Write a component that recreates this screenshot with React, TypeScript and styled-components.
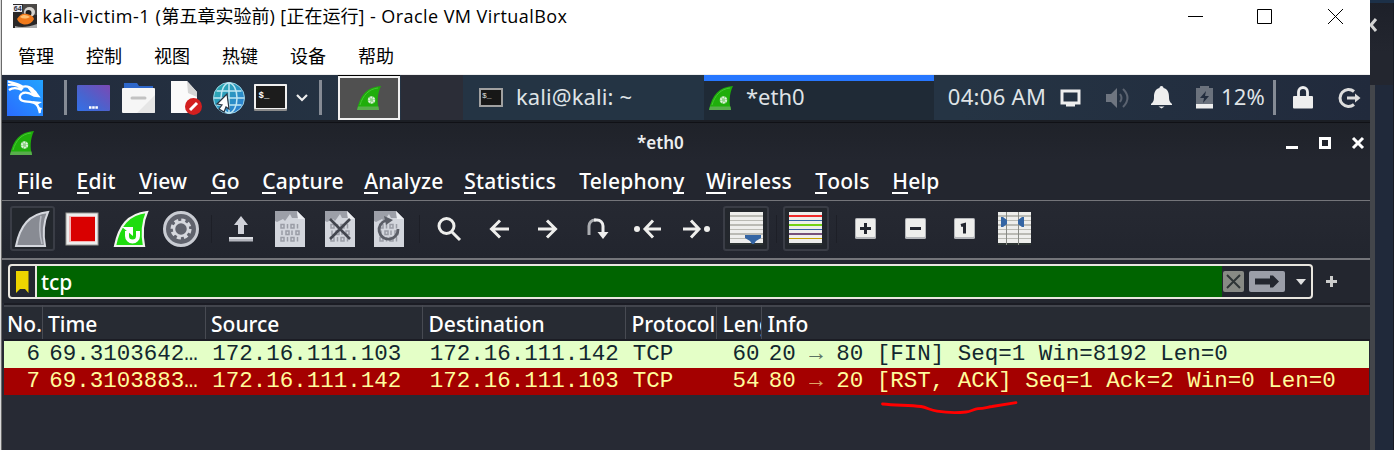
import React from 'react';
import styled, { createGlobalStyle } from 'styled-components';

const ui = `"Noto Sans", "Open Sans", sans-serif`;
const mono = `"Liberation Mono", "Courier New", monospace`;

const Global = createGlobalStyle`
  *, *::before, *::after { box-sizing: border-box; }
  body { margin: 0; overflow: hidden; background: #23262f; }
  svg { display: block; flex: none; overflow: visible; }
`;

const Screen = styled.div`
  width: 1394px; height: 450px; display: flex; overflow: hidden;
  background: #23262f; font-family: ${ui};
`;
const LeftEdge = styled.div`
  width: 2px; flex: none; background: linear-gradient(90deg, #d9d9d9 50%, #6a6a6a 50%);
`;
const Vm = styled.div`
  width: 1368px; flex: none; display: flex; flex-direction: column; background: #272a34;
`;
const RightEdge = styled.div`
  position: relative; flex: 1; display: flex; flex-direction: column; overflow: hidden;
  background: #23262f; border-top: 3px solid #1c3048;
`;
const RightTop = styled.div`
  height: 82px; color: #d4d4d4; padding-top: 15px; border-right: 1px solid #171a22;
  background: linear-gradient(#1d2029, #23262f 60%);
`;
const RightBody = styled.div`
  flex: 1; display: flex;
  &::before { content: ''; width: 5px; background: #43464b; }
  &::after { content: ''; flex: 1; background: #20293a; border-right: 1px solid #171a22; }
`;

const TitleBar = styled.div`
  height: 33px; flex: none; display: flex; align-items: center; background: #fff;
  padding: 0 0 0 11px; color: #000;
`;
const TitleText = styled.span<{ $ls?: number }>`
  font: 18px/24px "Open Sans", "Noto Sans CJK SC", sans-serif; margin-top: -2px;
  letter-spacing: ${p => p.$ls ?? 0}px; white-space: pre;
`;
const HostControls = styled.div`
  margin-left: auto; display: flex; align-items: center; gap: 54px; padding-right: 27px;
  & > :last-child { margin-left: 2px; }
`;
const HostMenu = styled.div`
  height: 42px; flex: none; display: flex; gap: 32px; padding: 10px 0 0 16px; background: #fff;
  border-bottom: 1px solid #eee;
  font: 18px/24px "Noto Sans CJK SC", sans-serif; color: #000;
`;

const Panel = styled.div`
  height: 45px; flex: none; display: flex; align-items: center;
  background: linear-gradient(90deg, #222b3c, #253444 30%, #253444 70%, #212a3c);
  color: #dfe3e6;
`;
const Slot = styled.div<{ $w: number; $ml?: number }>`
  width: ${p => p.$w}px; margin-left: ${p => p.$ml ?? 0}px; flex: none;
  display: flex; align-items: center; justify-content: center;
`;
const PanelDivider = styled.div<{ $ml: number }>`
  width: 3px; height: 35px; flex: none; margin-left: ${p => p.$ml}px; background: #858b95;
`;
const Launcher = styled.div`
  width: 62px; height: 44px; margin: 1px 0 0 16px; flex: none; border: 2px solid #f1f1f1; background: #505050;
  display: flex; align-items: center; justify-content: center; box-shadow: 0 -1px #000;
`;
const Gap = styled.div`
  width: 62px; height: 45px; margin-left: 1px; flex: none; background: #2b2d37;
`;
const Task = styled.div<{ $w: number; $active?: boolean; $pl: number }>`
  width: ${p => p.$w}px; height: 45px; flex: none; display: flex; align-items: center;
  gap: 13px; padding-left: ${p => p.$pl}px;
  background: ${p => (p.$active ? '#1f2a36' : '#243444')};
  box-shadow: ${p => (p.$active ? 'inset 0 6px #2777ff' : 'none')};
`;
const PanelText = styled.span<{ $ls?: number }>`
  font: 22px/30px ${ui}; letter-spacing: ${p => p.$ls ?? 0}px; white-space: pre;
  margin-top: -3px;
`;

const AppTitle = styled.div`
  height: 40px; flex: none; display: flex; align-items: center;
  padding: 3px 6px 0 8px; color: #eceef0; border-top: 2px solid #1b1e24;
  background: linear-gradient(#1f2229, #23262f);
  box-shadow: inset 0 1px #101116;
`;
const AppName = styled.span`
  width: 50px; margin: 0 0 0 603px; font: 600 17px/24px ${ui}; letter-spacing: 0; white-space: nowrap;
`;
const AppControls = styled.div`
  margin-left: auto; display: flex; align-items: center; gap: 21px;
`;
const MenuBar = styled.div`
  height: 41px; flex: none; display: flex; padding: 6px 0 0 15.6px;
  background: #23262f; color: #fff; border-bottom: 1px solid #74757a;
`;
const MenuItem = styled.span<{ $w: number }>`
  width: ${p => p.$w}px; flex: none; font: 500 21px/30px ${ui}; letter-spacing: 0.2px; white-space: nowrap;
`;
const Mnemonic = styled.span`
  box-shadow: inset 0 -2px #fff; display: inline-block; height: 28px; line-height: 30px;
`;
const Toolbar = styled.div`
  height: 59px; flex: none; display: flex; align-items: center; padding: 0 0 2px 7.7px;
  background: linear-gradient(#262932, #22252e); border-bottom: 2px solid #74757a;
`;
const Tool = styled.div<{ $pressed?: boolean }>`
  width: 45.5px; margin-right: 4px; height: 45px; flex: none; display: flex; align-items: center; justify-content: center;
  border-radius: 3px;
  border: ${p => (p.$pressed ? '2px solid #3a3d46' : 'none')};
  background: ${p => (p.$pressed ? '#23272d' : 'transparent')};
`;
const ToolDivider = styled.div`
  width: 1px; margin: 0 5.8px 0 3.5px; height: 28px; flex: none; background: #1d1f27;
`;

const FilterBar = styled.div`
  height: 43px; flex: none; display: flex; align-items: center; padding: 0 0 0 6px; background: #23262f;
`;
const FilterBox = styled.div`
  width: 1305px; height: 35px; flex: none; display: flex; align-items: center; overflow: hidden;
  border: 2px solid #e9e6df; border-radius: 4px; background: #23262f;
`;
const Bookmark = styled.div`
  width: 27px; height: 31px; flex: none; display: flex; align-items: center; justify-content: center;
  border-right: 2px solid #e9e6df;
`;
const FilterInput = styled.div`
  width: 1185px; height: 31px; flex: none; padding-left: 4px; background: #006400; color: #fff;
  font: 500 21px/32px ${ui};
`;
const FilterButton = styled.div<{ $w: number; $ml: number; $bg: string }>`
  width: ${p => p.$w}px; height: 21px; margin-left: ${p => p.$ml}px; flex: none; border-radius: 2px;
  display: flex; align-items: center; justify-content: center; background: ${p => p.$bg};
`;

const cols = '38.5px 163px 217.5px 203px 91px 45px 1fr';
const Header = styled.div`
  height: 38px; flex: none; display: grid; grid-template-columns: ${cols}; margin-left: 2px;
  border-top: 2px solid #1b1c24; border-bottom: 2px solid #1b1c24;
  box-shadow: inset 0 2px #42454d; background: #272b33; color: #fff;
`;
const HeadCell = styled.div`
  min-width: 0; overflow: hidden; padding: 5px 0 0 5.5px; border-right: 1px solid #474a52;
  font: 500 21px/29px ${ui}; white-space: nowrap;
  &:first-child { padding-left: 3px; }
  &:last-child { border-right: 0; }
`;
const Row = styled.div<{ $alert?: boolean }>`
  height: 27px; flex: none; display: grid; grid-template-columns: ${cols}; margin: 0 1px 0 2px;
  background: ${p => (p.$alert ? '#a40000' : '#e4ffc7')};
  color: ${p => (p.$alert ? '#fffc9c' : '#12272e')};
`;
const Cell = styled.div<{ $right?: boolean }>`
  min-width: 0; padding: ${p => (p.$right ? '0 2.5px 0 0' : '0 0 0 6.7px')}; font: 22.5px/27px ${mono};
  text-align: ${p => (p.$right ? 'right' : 'left')}; white-space: pre;
`;
const Arrow = styled.span`
  opacity: 0.65;
`;
const Empty = styled.div`
  flex: 1; position: relative; background: #272a34;
`;
const PenMark = styled.svg`
  position: absolute; left: 878px; top: 4px;
`;

const Fin = ({ size = 24 }: { size?: number }) => (
  <svg width={size} height={size} viewBox="0 0 24 24">
    <path d="M0 24C3 9 10 1 24 0C20 8 20 17 22 24Z" fill="#1fae0b" />
    <path d="M0 24L1 20.500H21.500L22 24Z" fill="#58ad4c" />
    <path d="M3 19C6 9 12 3 21 2" stroke="#45c633" strokeWidth="1" fill="none" />
    <circle cx="14.500" cy="14" r="3.800" fill="#8fd386" />
    <circle cx="14.500" cy="14" r="2.600" fill="none" stroke="#e2f5df" strokeWidth="1.800" strokeDasharray="1.700 1" />
  </svg>
);
const finPath = 'M2 35C6 15 15 3 34 1C29 12 29 24 31 35Z';
const GreyFin = () => (
  <svg width="36" height="36" viewBox="0 0 36 36">
    <path d={finPath} fill="#888b93" stroke="#d5d8de" strokeWidth="2" />
    <path d="M27 5C25 15 26 26 28 33" stroke="#b9bcc4" strokeWidth="1.500" fill="none" />
  </svg>
);
const RestartFin = () => (
  <svg width="36" height="36" viewBox="0 0 36 36">
    <path d={finPath} fill="#1fdc0f" stroke="#f2f4ef" strokeWidth="2.200" />
    <path d="M14 20v5a5.500 5.500 0 0 0 11 0v-5" fill="none" stroke="#fff" strokeWidth="4" />
    <path d="M9 16h11v9Z" fill="#fff" />
  </svg>
);
const Stop = () => (
  <svg width="34" height="34" viewBox="0 0 34 34">
    <rect x="1" y="1" width="32" height="32" fill="#eee" stroke="#9c9b97" />
    <rect x="4" y="4" width="26" height="26" fill="#f6b4b4" />
    <rect x="6" y="5" width="24" height="24" fill="#d90000" />
  </svg>
);
const Gear = () => (
  <svg width="36" height="36" viewBox="0 0 36 36">
    <circle cx="18" cy="18" r="16.500" fill="#60636d" stroke="#c9ccd3" strokeWidth="3" />
    <circle cx="18" cy="18" r="8.800" fill="none" stroke="#d6d8de" strokeWidth="3.500" strokeDasharray="4 2.912" />
    <circle cx="18" cy="18" r="7" fill="none" stroke="#d6d8de" strokeWidth="2.500" />
  </svg>
);
const Upload = () => (
  <svg width="24" height="26" viewBox="0 0 24 26">
    <path d="M12 0L19 9H15V18H9V9H5Z" fill="#d0d2d9" />
    <path d="M0 21H24V25.500H0Z" fill="#b4b6be" />
    <path d="M0 21H24V23H0Z" fill="#dcdee3" />
  </svg>
);
const DocFile = ({ mark }: { mark?: 'x' | 'reload' }) => (
  <svg width="30" height="36" viewBox="0 0 30 36">
    <path d="M0 0H22L30 8V36H0Z" fill="#d3d6dd" />
    <path d="M0 0H22L23 7H17L15 3L10 10L8 8L2 11L0 10Z" fill="#9c9fa8" />
    <path d="M22 0L30 8H23Z" fill="#eceef2" />
    <g fill="none" stroke="#9a9da6" strokeWidth="1.500">
      {[13.5, 20, 26.5].map(y => [6, 16].map(x => (
        <g key={`${x}-${y}`}>
          <rect x={x + (y === 20 ? 5 : 0)} y={y} width="3" height="3.500" />
          <path d={`M${x + (y === 20 ? 1 : 6.5)} ${y - 0.5}v4.500`} />
        </g>
      )))}
    </g>
    {mark === 'x' && <path d="M5 8L25 28M25 8L5 28" stroke="#43464f" strokeWidth="2.600" fill="none" />}
    {mark === 'reload' && (
      <>
        <path d="M12 9.500A9.500 9.500 0 1 0 24 18" stroke="#5b5e67" strokeWidth="2.800" fill="none" />
        <path d="M10 5L19 9L12 14Z" fill="#5b5e67" />
      </>
    )}
  </svg>
);
const Line = ({ d, w = 24, h = 24, dot }: { d: string; w?: number; h?: number; dot?: number }) => (
  <svg width={w} height={h} viewBox={`0 0 ${w} ${h}`} fill="none" stroke="#eeeeec" strokeWidth="3">
    <path d={d} />
    {dot !== undefined && <circle cx={dot} cy={h / 2} r="3" fill="#eeeeec" stroke="none" />}
  </svg>
);
const Sheet = ({ colors, children }: { colors: string[]; children?: React.ReactNode }) => (
  <svg width="33" height="33" viewBox="0 0 33 33">
    <g shapeRendering="crispEdges">
      <rect width="33" height="31" fill="#eeeeec" />
      <rect y="31" width="33" height="2" fill="#2d3433" />
      {colors.map((c, i) => (
        <rect key={i} y={[3, 8, 12, 17, 21, 26][i]} width="33" height={i % 2 ? 1 : 2} fill={c} />
      ))}
    </g>
    {children}
  </svg>
);
const grey = Array(6).fill('#babab4');
const BoxSign = ({ d }: { d: string }) => (
  <svg width="21" height="21" viewBox="0 0 21 21">
    <rect width="21" height="21" rx="1.500" fill="#b3b5b9" />
    <rect x="1" y="1" width="19" height="18" rx="1" fill="#eeeeec" />
    <path d={d} fill="none" stroke="#23262f" strokeWidth="3" />
  </svg>
);

const VmLogo = () => (
  <svg width="24" height="24" viewBox="0 0 24 24">
    <rect y="-1" width="24" height="24" fill="#2a2727" />
    <path d="M10 -1H24V10H9Z" fill="#4b4846" />
    <ellipse cx="16.500" cy="7" rx="5.500" ry="5" fill="#d8d5d0" />
    <circle cx="15.500" cy="8" r="3" fill="#222" />
    <rect width="9" height="7" fill="#ededf3" />
    <text x="0.800" y="6.200" fontSize="7" fontWeight="700" fontFamily="Liberation Sans" fill="#30303c">64</text>
    <path d="M4 14C7 9 10 8 14 9C18 10 20 11 21 14C19 18 15 20 11 19.500C8 19 5 17 4 14Z" fill="#f17a1b" />
    <path d="M7 12C10 9 14 10 17 12C13 14 10 14 7 12Z" fill="#ffc071" />
    <path d="M2 21C8 23 16 22 24 19V23H2Z" fill="#aaa" />
  </svg>
);
const KaliLogo = () => (
  <svg width="36" height="36" viewBox="0 0 36 36">
    <defs>
      <linearGradient id="kali" x1="0" y1="1" x2="1" y2="0">
        <stop stopColor="#2a6cff" /><stop offset="1" stopColor="#22a3ff" />
      </linearGradient>
    </defs>
    <rect width="36" height="36" fill="url(#kali)" />
    <path d="M1 1.500C6 3 11 3 16 7M1 5C6 4 11 5 16 9M2 10C6 7 11 8 15 10" stroke="#fff" strokeWidth="2.200" fill="none" />
    <path d="M15 7C20 5 26 8 28 12L31 16L27 15.500C23 13 19 12 16 13C12.500 14.500 12 18 14 20C17 23 24 20 29 24C32 26 32 30 33 33" stroke="#fff" strokeWidth="2.400" fill="none" />
    <path d="M20 7L29 11L31 17L25 14Z" fill="#fff" />
    <path d="M25 21L35 22L30 25ZM31 27L35 28L33 33Z" fill="#fff" />
  </svg>
);
const DesktopIcon = () => (
  <svg width="33" height="26" viewBox="0 0 33 26">
    <defs>
      <linearGradient id="desk" x1="0" y1="1" x2="1" y2="0">
        <stop stopColor="#3370e8" /><stop offset="0.400" stopColor="#4864cf" /><stop offset="1" stopColor="#7b49b4" />
      </linearGradient>
    </defs>
    <rect width="33" height="26" rx="1" fill="url(#desk)" />
    <path d="M12 22.500H21" stroke="#fff" strokeWidth="2.500" strokeDasharray="2.500 .7" />
  </svg>
);
const FolderIcon = () => (
  <svg width="33" height="30" viewBox="0 0 33 30">
    <path d="M2 0H15L17 3H31V12H2Z" fill="#2d66c9" />
    <rect y="5" width="33" height="25" rx="1" fill="#f6f6f6" />
    <path d="M15 30L33 12V29L32 30Z" fill="#e6e6e6" />
    <path d="M10 15H23" stroke="#c2c2c2" strokeWidth="3" strokeLinecap="round" />
  </svg>
);
const EditorIcon = () => (
  <svg width="31" height="34" viewBox="0 0 31 34">
    <path d="M0 0H16L26 11V32H0Z" fill="#fafafa" />
    <path d="M16 0L26 11V16L17 12Z" fill="#d5d5d5" />
    <circle cx="22.500" cy="25.500" r="8.500" fill="#d31f1f" />
    <path d="M19 29L26 22" stroke="#fff" strokeWidth="3" />
  </svg>
);
const GlobeIcon = () => (
  <svg width="32" height="32" viewBox="0 0 32 32">
    <defs>
      <linearGradient id="globe" x1="0" y1="0" x2="1" y2="1">
        <stop stopColor="#2bb2ab" /><stop offset="1" stopColor="#2b77d8" />
      </linearGradient>
    </defs>
    <circle cx="16" cy="16" r="15.500" fill="url(#globe)" stroke="#9bd3e6" />
    <g fill="none" stroke="#bfe6f2" strokeWidth="1.500">
      <path d="M16 1V31M1 16H31M3.500 9H28.500M3.500 23H28.500" />
      <ellipse cx="16" cy="16" rx="8" ry="15" />
    </g>
    <path d="M14 12L4 22L9 23L6 27L11 30L13 25L16 27Z" fill="#fff" stroke="#2a3442" strokeWidth="1.200" />
  </svg>
);
const TerminalIcon = () => (
  <svg width="33" height="27" viewBox="0 0 33 27">
    <rect width="33" height="27" rx="1" fill="#8b8b8b" />
    <rect width="33" height="25" rx="1" fill="#f0f0f0" />
    <rect x="2" y="2" width="29" height="22" fill="#1c1c1c" />
    <text x="4.500" y="14" fontSize="9" fontWeight="700" fontFamily="Liberation Mono" fill="#fff">$_</text>
  </svg>
);
const TaskTerminal = () => (
  <svg width="24" height="19" viewBox="0 0 24 19">
    <rect x="1" y="1" width="22" height="17" fill="#171717" stroke="#a0a0a0" strokeWidth="2" />
    <text x="3" y="10" fontSize="8" fontFamily="Liberation Mono" fill="#ddd">$_</text>
  </svg>
);

const menus: [string, number, number][] = [
  ['File', 0, 59], ['Edit', 0, 62.7], ['View', 0, 72], ['Go', 0, 51], ['Capture', 0, 102],
  ['Analyze', 0, 100], ['Statistics', 0, 115], ['Telephony', 8, 127], ['Wireless', 0, 109],
  ['Tools', 0, 77], ['Help', 0, 60],
];

export default function App() {
  return (
    <Screen>
      <Global />
      <LeftEdge />
      <Vm>
        <TitleBar>
          <VmLogo />
          <Slot $w={5.5} />
          <TitleText $ls={0.58}>kali-victim-1 (</TitleText>
          <TitleText>第五章实验前</TitleText>
          <TitleText $ls={0.4}>) [</TitleText>
          <TitleText>正在运行</TitleText>
          <TitleText $ls={0.44}>] - Oracle VM VirtualBox</TitleText>
          <HostControls>
            <svg width="15" height="15" viewBox="0 0 15 15"><path d="M0 7.500H15" stroke="#000" /></svg>
            <svg width="15" height="15" viewBox="0 0 15 15"><path d="M.5.5H14.500V14.500H.5Z" stroke="#000" fill="none" /></svg>
            <svg width="15" height="15" viewBox="0 0 15 15"><path d="M0 0L15 15M15 0L0 15" stroke="#000" /></svg>
          </HostControls>
        </TitleBar>
        <HostMenu>
          {['管理', '控制', '视图', '热键', '设备', '帮助'].map(t => <span key={t}>{t}</span>)}
        </HostMenu>

        <Panel>
          <Slot $w={36} $ml={5}><KaliLogo /></Slot>
          <PanelDivider $ml={21} />
          <Slot $w={33} $ml={10}><DesktopIcon /></Slot>
          <Slot $w={33} $ml={12}><FolderIcon /></Slot>
          <Slot $w={31} $ml={16}><EditorIcon /></Slot>
          <Slot $w={32} $ml={11}><GlobeIcon /></Slot>
          <Slot $w={33} $ml={9}><TerminalIcon /></Slot>
          <Slot $w={12} $ml={9}>
            <svg width="12" height="8" viewBox="0 0 12 8"><path d="M1 1L6 6L11 1" fill="none" stroke="#eee" strokeWidth="2.200" /></svg>
          </Slot>
          <PanelDivider $ml={11} />
          <Launcher><Fin /></Launcher>
          <Gap />
          <Task $w={241} $pl={16}><TaskTerminal /><PanelText $ls={0.1}>kali@kali: ~</PanelText></Task>
          <Task $w={230} $pl={5} $active><Fin /><PanelText>*eth0</PanelText></Task>
          <Slot $w={98} $ml={14}><PanelText $ls={0.3}>04:06 AM</PanelText></Slot>
          <Slot $w={21} $ml={14}>
            <svg width="21" height="18" viewBox="0 0 21 18">
              <path d="M2 2H19V14H2Z" fill="none" stroke="#eee" strokeWidth="3" />
              <path d="M6 14H15V17.500H6Z" fill="#eee" />
            </svg>
          </Slot>
          <Slot $w={23} $ml={25}>
            <svg width="23" height="22" viewBox="0 0 23 22">
              <path d="M0 7H5L11 1V21L5 15H0Z" fill="#6e7580" />
              <path d="M14 7Q17 11 14 15M17 2Q26 11 17 20" fill="none" stroke="#5b6370" strokeWidth="2" />
            </svg>
          </Slot>
          <Slot $w={21} $ml={22}>
            <svg width="21" height="23" viewBox="0 0 21 23">
              <path d="M10.500 0C12 0 12.500 1 12.500 2C17 3 18 7 18 11C18 15 19 16 21 18V19H0V18C2 16 3 15 3 11C3 7 4 3 8.500 2C8.500 1 9 0 10.500 0ZM7.500 20.500H13.500L10.500 22.500Z" fill="#eee" />
            </svg>
          </Slot>
          <Slot $w={17} $ml={24}>
            <svg width="17" height="23" viewBox="0 0 17 23">
              <path d="M4 0H13V2H17V18H0V2H4Z" fill="#6b727d" />
              <path d="M10 5L4 12H8L7 17L13 10H9Z" fill="#232d3e" />
              <path d="M0 18H17V22.500H0Z" fill="#eee" />
            </svg>
          </Slot>
          <Slot $w={44} $ml={8}><PanelText $ls={0.2}>12%</PanelText></Slot>
          <PanelDivider $ml={8} />
          <Slot $w={20} $ml={17}>
            <svg width="20" height="23" viewBox="0 0 20 23">
              <path d="M5.500 11V6a4.500 4.500 0 0 1 9 0V11" fill="none" stroke="#eee" strokeWidth="2.800" />
              <rect y="10" width="20" height="12.500" rx="1" fill="#eee" />
            </svg>
          </Slot>
          <Slot $w={23} $ml={25}>
            <svg width="23" height="22" viewBox="0 0 23 22" fill="none" stroke="#ddd" strokeWidth="3">
              <path d="M16 4.500A8.500 8.500 0 1 0 16 17.500M9 11H20" />
              <path d="M17 6.500L22.500 11L17 15.500Z" fill="#ddd" stroke="none" />
            </svg>
          </Slot>
        </Panel>

        <AppTitle>
          <Fin />
          <AppName>*eth0</AppName>
          <AppControls>
            <svg width="12" height="12" viewBox="0 0 12 12"><path d="M0 10.500H12" stroke="#fff" strokeWidth="3" /></svg>
            <svg width="12" height="12" viewBox="0 0 12 12"><path d="M1.500 1.500H10.500V10.500H1.500Z" fill="none" stroke="#fff" strokeWidth="3" /></svg>
            <svg width="12" height="12" viewBox="0 0 12 12"><path d="M1 1L11 11M11 1L1 11" stroke="#fff" strokeWidth="3" /></svg>
          </AppControls>
        </AppTitle>
        <MenuBar>
          {menus.map(([t, k, w]) => (
            <MenuItem key={t} $w={w}>{t.slice(0, k)}<Mnemonic>{t[k]}</Mnemonic>{t.slice(k + 1)}</MenuItem>
          ))}
        </MenuBar>

        <Toolbar>
          <Tool $pressed><GreyFin /></Tool>
          <Tool><Stop /></Tool>
          <Tool><RestartFin /></Tool>
          <Tool><Gear /></Tool>
          <ToolDivider />
          <Tool><Upload /></Tool>
          <Tool><DocFile /></Tool>
          <Tool><DocFile mark="x" /></Tool>
          <Tool><DocFile mark="reload" /></Tool>
          <ToolDivider />
          <Tool><Line d="M17 9A7.500 7.500 0 1 1 2 9A7.500 7.500 0 0 1 17 9M14.500 14.500L23 23" /></Tool>
          <Tool><Line w={20} h={20} d="M20 10H3M11 1.500L2.500 10L11 18.500" /></Tool>
          <Tool><Line w={20} h={20} d="M0 10H17M9 1.500L17.500 10L9 18.500" /></Tool>
          <Tool>
            <svg width="22" height="22" viewBox="0 0 22 22" fill="none">
              <path d="M2 17V8A6 6 0 0 1 8 2H9" stroke="#aaacb0" strokeWidth="3" />
              <path d="M7 2H10A6 6 0 0 1 16 8V17" stroke="#eee" strokeWidth="3" />
              <path d="M10.500 14H21.500L16 21Z" fill="#eee" />
            </svg>
          </Tool>
          <Tool><Line w={27} h={20} dot={3} d="M27 10H12M19 1.500L11 10L19 18.500" /></Tool>
          <Tool><Line w={27} h={20} dot={24} d="M0 10H15M8 1.500L16 10L8 18.500" /></Tool>
          <Tool $pressed><Sheet colors={grey}><path d="M15 23H31V26L26 29L24 32H22L20 29L15 26Z" fill="#3465a4" /></Sheet></Tool>
          <ToolDivider />
          <Tool $pressed><Sheet colors={['#ef2929', '#3465a4', '#73d216', '#3465a4', '#75507b', '#c4a000']} /></Tool>
          <ToolDivider />
          <Tool><BoxSign d="M5 10.500H16M10.500 5V16" /></Tool>
          <Tool><BoxSign d="M5 10.500H16" /></Tool>
          <Tool><BoxSign d="M7 7.500L10.500 6.500V15.500" /></Tool>
          <Tool>
            <Sheet colors={grey}>
              <path d="M8.500 0V33M20.500 0V33" stroke="#888a85" />
              <path d="M3 5H5L9 8V12L5 15H3ZM26 5H24L20 8V12L24 15H26Z" fill="#3465a4" />
            </Sheet>
          </Tool>
        </Toolbar>

        <FilterBar>
          <FilterBox>
            <Bookmark>
              <svg width="13" height="22" viewBox="0 0 13 22"><path d="M0 0H12.500V22L9 18H4L0 22Z" fill="#edd400" /></svg>
            </Bookmark>
            <FilterInput>tcp</FilterInput>
            <FilterButton $w={21} $ml={1} $bg="#888a85">
              <svg width="15" height="15" viewBox="0 0 15 15"><path d="M1 1L14 14M14 1L1 14" stroke="#2e3436" strokeWidth="2" /></svg>
            </FilterButton>
            <FilterButton $w={36} $ml={5} $bg="#9b9ea8">
              <svg width="24" height="13" viewBox="0 0 24 13"><path d="M0 3.500H15V0.500H18L24 6.500L18 12.500H15V9.500H0Z" fill="#23262f" /></svg>
            </FilterButton>
            <FilterButton $w={10} $ml={11} $bg="transparent">
              <svg width="10" height="6" viewBox="0 0 10 6"><path d="M0 0H10L5 6Z" fill="#e0e0e0" /></svg>
            </FilterButton>
          </FilterBox>
          <Slot $w={11} $ml={13}>
            <svg width="11" height="11" viewBox="0 0 11 11"><path d="M0 5.500H11M5.500 0V11" stroke="#ccc" strokeWidth="3" /></svg>
          </Slot>
        </FilterBar>

        <Header>
          {['No.', 'Time', 'Source', 'Destination', 'Protocol', 'Length', 'Info'].map(t => <HeadCell key={t}>{t}</HeadCell>)}
        </Header>
        <Row>
          <Cell $right>6</Cell><Cell>69.3103642…</Cell><Cell>172.16.111.103</Cell><Cell>172.16.111.142</Cell>
          <Cell>TCP</Cell><Cell $right>60</Cell><Cell>20 <Arrow>→</Arrow> 80 [FIN] Seq=1 Win=8192 Len=0</Cell>
        </Row>
        <Row $alert>
          <Cell $right>7</Cell><Cell>69.3103883…</Cell><Cell>172.16.111.142</Cell><Cell>172.16.111.103</Cell>
          <Cell>TCP</Cell><Cell $right>54</Cell><Cell>80 <Arrow>→</Arrow> 20 [RST, ACK] Seq=1 Ack=2 Win=0 Len=0</Cell>
        </Row>
        <Empty>
          <PenMark width="140" height="20" viewBox="0 0 140 20">
            <path d="M2.500 5C16 6.500 29 6 41 7.500C47 8.500 50 11 57 12.200C67 13.800 77 14 86 13C91 12.400 94 10 98 9.700C104 9.700 108 8 112 7.500L136 3.700" fill="none" stroke="#f00" strokeWidth="2.800" strokeLinecap="round" />
          </PenMark>
        </Empty>
      </Vm>
      <RightEdge>
        <RightTop>
          <svg width="8" height="14" viewBox="0 0 8 14"><path d="M6 1L1 7L6 13" fill="none" stroke="#d4d4d4" strokeWidth="3" /></svg>
        </RightTop>
        <RightBody />
      </RightEdge>
    </Screen>
  );
}
